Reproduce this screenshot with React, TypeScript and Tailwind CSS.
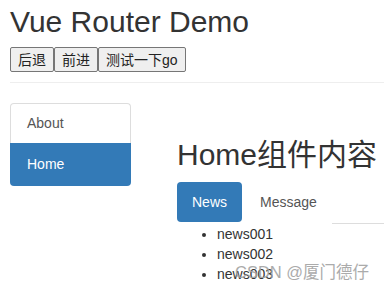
import React from "react";

export default function App() {
  const font = { fontFamily: '"Liberation Sans", Arial, "Noto Sans CJK SC", sans-serif' };
  return (
    <div
      className="relative w-[384px] h-[290px] overflow-hidden bg-white text-[#333] pl-[10px]"
      style={font}
    >
      <h2 className="pt-[5px] text-[30px] leading-[33px] font-normal">Vue Router Demo</h2>
      <div className="mt-[9px] flex">
        {["后退", "前进", "测试一下go"].map((t) => (
          <button
            key={t}
            className="h-[25px] px-[7px] text-[14px] leading-[20px] text-[#222] bg-[#efefef] border border-[#767676] rounded-[2px]"
          >
            {t}
          </button>
        ))}
      </div>
      <div className="mt-[10px] h-px bg-[#eee]" />
      <div className="flex items-start">
        <div className="mt-[20px] w-[121px] text-[14px]">
          <div className="h-[40px] flex items-center pl-[16px] border border-b-0 border-[#ddd] rounded-t-[4px] text-[#555]">
            About
          </div>
          <div className="h-[43px] flex items-center pl-[17px] bg-[#337ab7] text-white rounded-b-[4px]">
            Home
          </div>
        </div>
        <div className="ml-[46px] flex-1 flex flex-col">
          <h2 className="mt-[55px] text-[30px] leading-[33px] font-normal whitespace-nowrap">
            Home组件内容
          </h2>
          <div className="mt-[11px] flex items-start text-[14px]">
            <div className="h-[40px] px-[15px] flex items-center bg-[#337ab7] text-white rounded-[4px]">
              News
            </div>
            <div className="ml-[3px] h-[40px] px-[15px] flex items-center text-[#555]">
              Message
            </div>
            <div className="flex-1 h-[42px] border-b border-[#ddd]" />
          </div>
          <ul className="list-disc pl-[40px] text-[14px] leading-[20px]">
            <li>news001</li>
            <li>news002</li>
            <li>news003</li>
          </ul>
        </div>
      </div>
      <div
        className="absolute left-[235px] top-[261px] text-[16.5px] leading-[22px] text-[#a3a3a3] opacity-90 whitespace-nowrap"
        style={{ fontFamily: '"Liberation Sans", Arial, "Noto Sans CJK SC", sans-serif' }}
      >
        CSDN @厦门德仔
      </div>
    </div>
  );
}
